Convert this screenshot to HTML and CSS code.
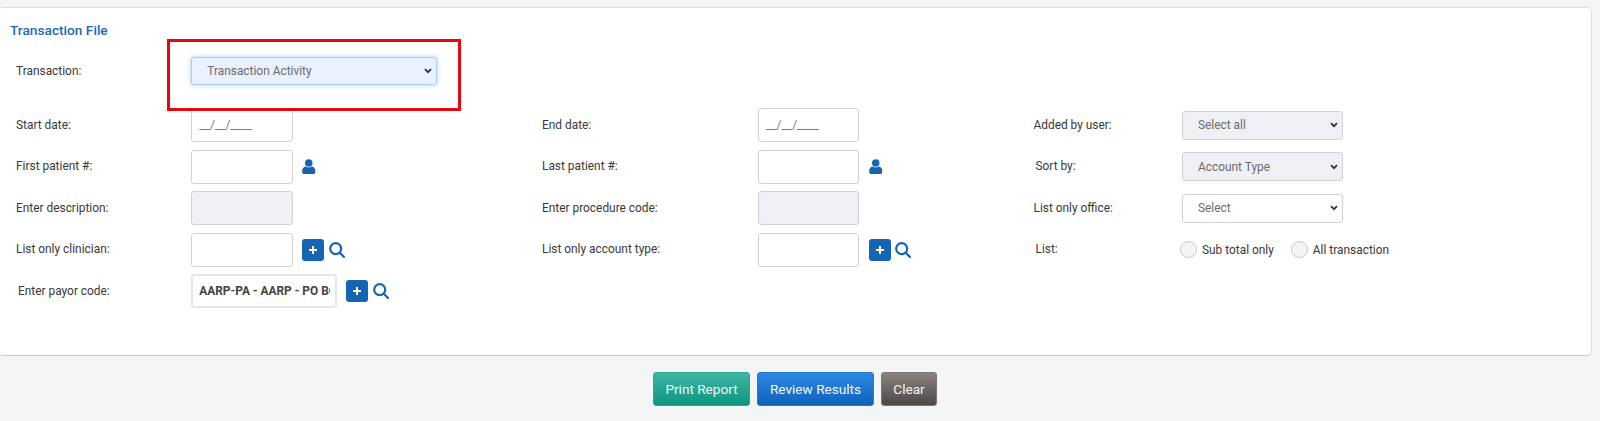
FILE: index.html
```html
<!DOCTYPE html>
<html lang="en">
<head>
<meta charset="utf-8">
<title>Transaction File</title>
<link rel="stylesheet" href="styles.css">
</head>
<body>
<main class="page">
  <section class="card">
    <h2 class="card-title">Transaction File</h2>
    <div class="transaction-row">
      <label class="label">Transaction:</label>
      <div class="highlight-anchor">
        <select class="select select-focus"><option>Transaction Activity</option></select>
        <div class="highlight"></div>
      </div>
    </div>
    <div class="form-grid">
      <label class="label">Start date:</label>
      <div class="control"><input class="input" placeholder="__/__/____"></div>
      <label class="label">End date:</label>
      <div class="control"><input class="input" placeholder="__/__/____"></div>
      <label class="label">Added by user:</label>
      <div class="control"><select class="select select-small select-disabled"><option>Select all</option></select></div>

      <label class="label">First patient #:</label>
      <div class="control"><input class="input">
        <svg class="icon-user" viewBox="0 0 14 16"><circle cx="7" cy="4.2" r="4"/><path d="M0 14v-1.6C0 9.800 1.800 8 4 8c.9.600 1.900 1 3 1s2.100-.4 3-1c2.200 0 4 1.800 4 4.400V14c0 1.100-.9 2-2 2H2c-1.100 0-2-.9-2-2z"/></svg>
      </div>
      <label class="label">Last patient #:</label>
      <div class="control"><input class="input">
        <svg class="icon-user" viewBox="0 0 14 16"><circle cx="7" cy="4.2" r="4"/><path d="M0 14v-1.6C0 9.800 1.800 8 4 8c.9.600 1.900 1 3 1s2.100-.4 3-1c2.200 0 4 1.800 4 4.400V14c0 1.100-.9 2-2 2H2c-1.100 0-2-.9-2-2z"/></svg>
      </div>
      <label class="label label-shift">Sort by:</label>
      <div class="control"><select class="select select-small select-disabled"><option>Account Type</option></select></div>

      <label class="label">Enter description:</label>
      <div class="control"><input class="input input-disabled" disabled></div>
      <label class="label">Enter procedure code:</label>
      <div class="control"><input class="input input-disabled" disabled></div>
      <label class="label">List only office:</label>
      <div class="control"><select class="select select-small"><option>Select</option></select></div>

      <label class="label">List only clinician:</label>
      <div class="control"><input class="input">
        <button class="add-btn" type="button"><svg viewBox="0 0 10 10"><path d="M5 1v8M1 5h8"/></svg></button>
        <svg class="icon-search" viewBox="0 0 16 16"><circle cx="6.700" cy="6.700" r="5.500"/><path d="M10.800 10.800 15 15"/></svg>
      </div>
      <label class="label">List only account type:</label>
      <div class="control"><input class="input">
        <button class="add-btn" type="button"><svg viewBox="0 0 10 10"><path d="M5 1v8M1 5h8"/></svg></button>
        <svg class="icon-search" viewBox="0 0 16 16"><circle cx="6.700" cy="6.700" r="5.500"/><path d="M10.800 10.800 15 15"/></svg>
      </div>
      <label class="label label-shift">List:</label>
      <div class="control radios">
        <label class="radio-item"><input type="radio" name="list" class="radio">Sub total only</label>
        <label class="radio-item"><input type="radio" name="list" class="radio">All transaction</label>
      </div>

      <label class="label label-shift">Enter payor code:</label>
      <div class="control"><input class="input input-wide" value="AARP-PA - AARP - PO BOX 740819">
        <button class="add-btn" type="button"><svg viewBox="0 0 10 10"><path d="M5 1v8M1 5h8"/></svg></button>
        <svg class="icon-search" viewBox="0 0 16 16"><circle cx="6.700" cy="6.700" r="5.500"/><path d="M10.800 10.800 15 15"/></svg>
      </div>
    </div>
  </section>
  <div class="actions">
    <button class="btn btn-print" type="button">Print Report</button>
    <button class="btn btn-review" type="button">Review Results</button>
    <button class="btn btn-clear" type="button">Clear</button>
  </div>
</main>
</body>
</html>
```
FILE: styles.css
```css
* { box-sizing: border-box; }
html, body { margin: 0; height: 100%; overflow: hidden; }
body { background: #f3f5f7; font-family: Roboto, "Liberation Sans", sans-serif; font-size: 11.900px; color: #3a3a3a; }

.page { width: 1594px; margin-left: -2px; padding-top: 7px; }

.card {
  height: 349px;
  background: #fff;
  border: 1px solid #d3e6d3;
  border-bottom-color: #b7d4b4;
  border-right-color: #cfe6cf;
  border-radius: 5px;
  padding: 15px 0 0 11px;
}
.card-title { margin: 0; font-size: 13.700px; font-weight: 500; line-height: 15px; color: #1a6bb8; }

.transaction-row {
  display: grid;
  grid-template-columns: 175.250px 246px;
  align-items: center;
  margin: 19px 0 0 6px;
  height: 28px;
}
.highlight-anchor { position: relative; height: 28px; }
.highlight {
  position: absolute;
  left: -24px;
  top: -18px;
  width: 294px;
  height: 72px;
  border: 3px solid #e8060e;
  z-index: 2;
  pointer-events: none;
}

.form-grid {
  display: grid;
  grid-template-columns: 175.250px 350.750px 215.800px 275.700px 148.500px 1fr;
  grid-auto-rows: 34px;
  row-gap: 7.500px;
  align-items: center;
  margin: 23px 0 0 6px;
}
.label { line-height: 13px; color: #3a3a3a; white-space: nowrap; }
.label-shift { margin-left: 2px; }
.control { display: flex; align-items: center; height: 34px; }

.input {
  width: 101.500px;
  height: 34px;
  padding: 0 7px;
  border: 1px solid #d2d2d2;
  border-radius: 3px;
  background: #fff;
  font: 11.900px Roboto, "Liberation Sans", sans-serif;
  color: #444;
  outline: none;
}
.input::placeholder { color: #7b7b7b; opacity: 1; }
.input-disabled { background: #eff0f3; }
.input-wide { width: 145.500px; font-weight: 700; border-width: 2px; border-color: #e6e6e6; padding: 0 5px 0 6px; }

.select {
  appearance: none;
  width: 246px;
  height: 28px;
  padding: 0 0 0 15px;
  border: 1px solid #cfd2d6;
  border-radius: 3px;
  background-color: #fff;
  background-image: url("data:image/svg+xml,%3Csvg xmlns='http://www.w3.org/2000/svg' viewBox='0 0 8 6'%3E%3Cpath d='M1 1.200 4 4.200 7 1.200' fill='none' stroke='%23333' stroke-width='1.800'/%3E%3C/svg%3E");
  background-repeat: no-repeat;
  background-position: right 4px center;
  background-size: 8px 6px;
  font: 11.900px Roboto, "Liberation Sans", sans-serif;
  color: #6c6c6c;
  outline: none;
}
.select-focus { background-color: #e8f1fd; border-color: #aecdf3; box-shadow: 0 0 4px rgba(90, 155, 235, .55); }
.select-small { width: 161px; height: 29px; }
.select-disabled { background-color: #eff0f3; }

.icon-user { width: 13.500px; height: 15px; margin-left: 9.500px; fill: #1565b4; }
.add-btn {
  display: flex;
  align-items: center;
  justify-content: center;
  flex: none;
  width: 22px;
  height: 22px;
  margin-left: 9.500px;
  padding: 0;
  border: 0;
  border-radius: 3px;
  background: #1565b4;
}
.add-btn svg { width: 10px; height: 10px; fill: none; stroke: #fff; stroke-width: 2; }
.icon-search { width: 16px; height: 16px; margin-left: 4.500px; fill: none; stroke: #1565b4; stroke-width: 2.200; stroke-linecap: round; }

.radios { gap: 17px; margin-left: -2px; }
.radio-item { display: flex; align-items: center; gap: 5px; white-space: nowrap; color: #3a3a3a; }
.radio {
  appearance: none;
  width: 17px;
  height: 17px;
  margin: 0;
  border: 1.500px solid #cbc9c2;
  border-radius: 50%;
  background: #f5f4f2;
}

.actions { display: flex; justify-content: center; gap: 7px; margin-top: 16px; }
.btn {
  height: 34px;
  padding: 0;
  border: 1px solid transparent;
  border-radius: 3px;
  font: 400 13.600px Roboto, "Liberation Sans", sans-serif;
  color: #f4f7f7;
}
.btn-print { width: 97px; background: linear-gradient(#3db5a2, #0e9680); border-color: #2aa893; }
.btn-review { width: 117px; background: linear-gradient(#2c88e2, #0e63ba); border-color: #2279d2; }
.btn-clear { width: 56px; background: linear-gradient(#8d8282, #4b4848); border-color: #777; }
```
